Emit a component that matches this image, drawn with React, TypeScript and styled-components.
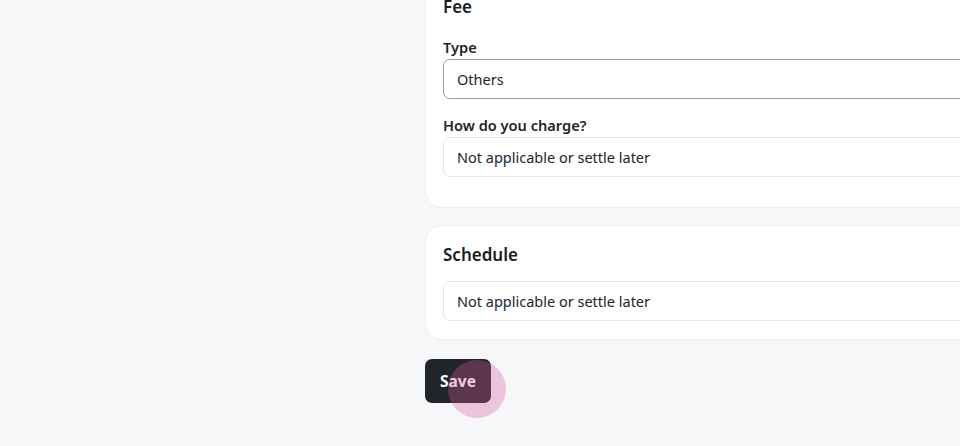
import React from "react";
import styled, { createGlobalStyle } from "styled-components";

const Global = createGlobalStyle`
  html, body { margin: 0; padding: 0; background: #f6f7f9; overflow: hidden; }
  body { font-family: "Noto Sans", "Open Sans", sans-serif; color: #212529; }
  * { box-sizing: border-box; }
`;

const Page = styled.div`
  width: 960px;
  height: 446px;
  overflow: hidden;
  background: #f6f7f9;
`;

const Column = styled.div`
  margin-top: -23px;
  margin-left: 425px;
  width: 620px;
  display: flex;
  flex-direction: column;
`;

const Card = styled.section<{ $bottom: number; $mb: number }>`
  background: #ffffff;
  border: 1px solid #eceef1;
  border-radius: 16px;
  padding: 17px 17px ${(p) => p.$bottom}px 17px;
  margin-bottom: ${(p) => p.$mb}px;
  display: flex;
  flex-direction: column;
`;

const Heading = styled.h3<{ $mb: number }>`
  margin: 0 0 ${(p) => p.$mb}px 0;
  font-size: 17px;
  font-weight: 600;
  line-height: 24px;
  color: #1b1e21;
`;

const Field = styled.div<{ $mb?: number }>`
  display: flex;
  flex-direction: column;
  margin-bottom: ${(p) => p.$mb ?? 0}px;
`;

const Label = styled.label`
  font-size: 14.6px;
  font-weight: 600;
  line-height: 20px;
  margin-bottom: 2px;
  color: #212529;
`;

const Select = styled.div<{ $active?: boolean }>`
  height: 40px;
  display: flex;
  align-items: center;
  padding: 0 13px;
  border-radius: 7px;
  background: #fff;
  border: ${(p) => (p.$active ? "1.5px solid #9b9b9b" : "1.5px solid #e2e5ea")};
  font-size: 14.5px;
  color: #212529;
`;

const Actions = styled.div`
  display: flex;
`;

const SaveButton = styled.button`
  position: relative;
  height: 44px;
  padding: 0 15px;
  border: none;
  border-radius: 7px;
  background: #212529;
  color: #fff;
  font-family: "Noto Sans", "Open Sans", sans-serif;
  font-size: 15.5px;
  font-weight: 700;
  cursor: pointer;
`;

const Ripple = styled.span`
  position: absolute;
  left: 23px;
  top: 1px;
  width: 58px;
  height: 58px;
  border-radius: 50%;
  background: rgba(214, 90, 160, 0.32);
  pointer-events: none;
`;

export default function App() {
  return (
    <Page>
      <Global />
      <Column>
        <Card $bottom={30} $mb={17}>
          <Heading $mb={18}>Fee</Heading>
          <Field $mb={16}>
            <Label>Type</Label>
            <Select $active>Others</Select>
          </Field>
          <Field>
            <Label>How do you charge?</Label>
            <Select>Not applicable or settle later</Select>
          </Field>
        </Card>
        <Card $bottom={18} $mb={19}>
          <Heading $mb={14}>Schedule</Heading>
          <Select>Not applicable or settle later</Select>
        </Card>
        <Actions>
          <SaveButton>
            Save
            <Ripple />
          </SaveButton>
        </Actions>
      </Column>
    </Page>
  );
}
